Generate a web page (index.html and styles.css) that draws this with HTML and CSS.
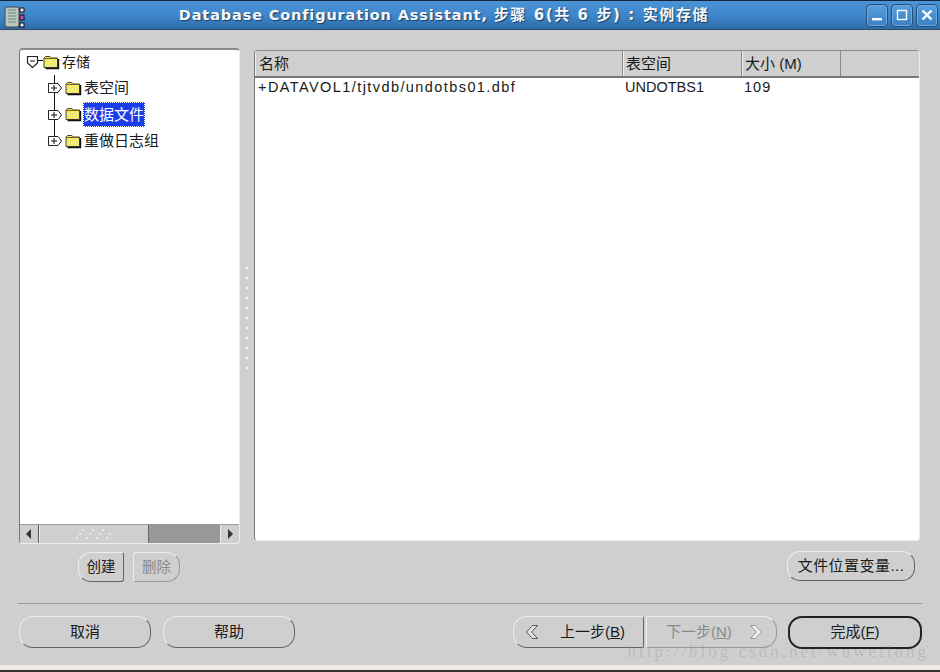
FILE: index.html
```html
<!DOCTYPE html>
<html lang="zh-CN">

<head>
  <meta charset="UTF-8">
  <title>Database Configuration Assistant</title>
  <link rel="stylesheet" href="styles.css">
</head>

<body>
  <svg class="defs" width="0" height="0">
    <defs>
      <pattern id="dither" width="2" height="2" patternUnits="userSpaceOnUse">
        <rect width="2" height="2" fill="#fdf65a"/>
        <rect width="1" height="1" fill="#e4e08c"/>
        <rect x="1" y="1" width="1" height="1" fill="#e4e08c"/>
      </pattern>
      <g id="folder">
        <path d="M1 3 L2.5 1.5 H7 L8.5 3 H14.5 V12.5 H1 Z" fill="url(#dither)" stroke="#4a4520" stroke-width="1"/>
        <path d="M1.5 3.5 H14" stroke="#6a5f20" stroke-width="1"/>
        <path d="M15.5 4 V13.5 H2.5" fill="none" stroke="#111" stroke-width="1.4"/>
      </g>
      <g id="expander">
        <path d="M1.5 1.5 H11 L14.5 6 L11 10.5 H1.5 Z" fill="#fff" stroke="#222" stroke-width="1"/>
        <path d="M4 6 H10 M7 3 V9" stroke="#111" stroke-width="1"/>
      </g>
    </defs>
  </svg>
  <div class="window">
    <header class="titlebar">
      <svg class="app-icon" width="36" height="25" viewBox="0 0 36 25">
        <rect x="3" y="4" width="14" height="20" rx="2" fill="#b9c6c0" stroke="#444"/>
        <path d="M6 7 H14 M6 10 H14 M6 13 H14 M6 16 H14 M6 19 H14" stroke="#6f8a80" stroke-width="1"/>
        <rect x="18" y="5" width="4" height="4" fill="#eee" stroke="#111"/>
        <rect x="18" y="12" width="4" height="5" fill="#c050c0" stroke="#111"/>
        <rect x="18" y="20" width="4" height="4" fill="#eee" stroke="#111"/>
      </svg>
      <div class="title">Database Configuration Assistant, <span class="title-cjk">步骤 6(共 6 步) : 实例存储</span></div>
      <div class="win-btns">
        <div class="win-btn">
          <svg width="20" height="20" viewBox="0 0 20 20"><rect x="5" y="13" width="10" height="2.4" fill="#fff"/></svg>
        </div>
        <div class="win-btn">
          <svg width="20" height="20" viewBox="0 0 20 20"><rect x="5.5" y="5.5" width="9" height="9" fill="none" stroke="#fff" stroke-width="1.4"/></svg>
        </div>
        <div class="win-btn">
          <svg width="20" height="20" viewBox="0 0 20 20"><path d="M5.5 5.5 L14.5 14.5 M14.5 5.5 L5.5 14.5" stroke="#fff" stroke-width="2.4"/></svg>
        </div>
      </div>
    </header>

    <main class="content">
      <div class="panes">
        <div class="left-pane">
          <div class="tree-box">
            <div class="tree">
              <div class="root-row">
                <svg class="root-exp" width="18" height="18" viewBox="0 0 18 18">
                  <path d="M2.5 3.5 H12.5 V10 L7.5 14.5 L2.5 10 Z" fill="#fff" stroke="#222" stroke-width="1.2"/>
                  <path d="M5 8 H10" stroke="#111"/>
                  <path d="M13 7.5 H18" stroke="#111"/>
                </svg>
                <svg class="folder" width="17" height="15"><use href="#folder"/></svg>
                <span class="node-label root-label">存储</span>
              </div>
              <div class="children">
                <div class="tree-row">
                  <svg class="exp" width="18" height="12"><use href="#expander"/></svg>
                  <svg class="folder" width="17" height="15"><use href="#folder"/></svg>
                  <span class="node-label">表空间</span>
                </div>
                <div class="tree-row">
                  <svg class="exp" width="18" height="12"><use href="#expander"/></svg>
                  <svg class="folder" width="17" height="15"><use href="#folder"/></svg>
                  <span class="node-label selected">数据文件</span>
                </div>
                <div class="tree-row">
                  <svg class="exp" width="18" height="12"><use href="#expander"/></svg>
                  <svg class="folder" width="17" height="15"><use href="#folder"/></svg>
                  <span class="node-label">重做日志组</span>
                </div>
              </div>
            </div>
            <div class="scrollbar">
              <div class="arrow-btn">
                <svg width="8" height="10" viewBox="0 0 8 10"><path d="M6 0 V10 L1 5 Z" fill="#333"/></svg>
              </div>
              <div class="thumb">
                <svg width="36" height="12" viewBox="0 0 36 12">
                  <path d="M6 1h2v2h-2z M16 1h2v2h-2z M26 1h2v2h-2z M3 5h2v2h-2z M13 5h2v2h-2z M23 5h2v2h-2z M33 5h2v2h-2z M0 9h2v2h-2z M10 9h2v2h-2z M20 9h2v2h-2z M30 9h2v2h-2z" fill="#e8e8e8"/>
                </svg>
              </div>
              <div class="track"></div>
              <div class="arrow-btn right">
                <svg width="8" height="10" viewBox="0 0 8 10"><path d="M2 0 V10 L7 5 Z" fill="#333"/></svg>
              </div>
            </div>
          </div>
          <div class="tree-actions">
            <button class="btn small pressed">创建</button>
            <button class="btn small disabled">删除</button>
          </div>
        </div>

        <div class="splitter"><span class="dots"></span></div>

        <div class="right-pane">
          <div class="table-box">
            <div class="table-head">
              <div class="col col-name">名称</div>
              <div class="col col-space">表空间</div>
              <div class="col col-size">大小 (M)</div>
              <div class="col col-rest"></div>
            </div>
            <div class="table-row">
              <div class="cell col-name file-name">+DATAVOL1/tjtvdb/undotbs01.dbf</div>
              <div class="cell col-space">UNDOTBS1</div>
              <div class="cell col-size">109</div>
            </div>
          </div>
          <div class="file-actions">
            <button class="btn vars">文件位置变量...</button>
          </div>
        </div>
      </div>

      <div class="separator"></div>

      <footer class="footer">
        <div class="footer-left">
          <button class="btn wide">取消</button>
          <button class="btn wide">帮助</button>
        </div>
        <div class="footer-right">
          <button class="btn nav back">
            <svg width="18" height="18" viewBox="0 0 18 18"><path d="M9.5 2.5 L3.5 9 L9.5 15.5 L14.5 15.5 L8.5 9 L14.5 2.5 Z" fill="#e8e8e8" stroke="#555"/></svg>
            <span>上一步(<u>B</u>)</span>
          </button>
          <button class="btn nav next disabled">
            <span>下一步(<u>N</u>)</span>
            <svg width="18" height="18" viewBox="0 0 18 18"><path d="M8.5 2.5 L14.5 9 L8.5 15.5 L3.5 15.5 L9.5 9 L3.5 2.5 Z" fill="#eee" stroke="#999"/></svg>
          </button>
          <button class="btn finish">完成(<u>F</u>)</button>
        </div>
      </footer>
      <div class="watermark">http://blog.csdn.net/wuweilong</div>
    </main>
    <div class="bottom-edge"></div>
  </div>
</body>

</html>
```

FILE: styles.css
```css
html,
body {
  margin: 0;
  padding: 0;
  height: 100%;
  background: #cfcfcf;
  color: #1a1a1a;
  font-family: "Liberation Sans", "Noto Sans CJK SC", sans-serif;
  font-size: 15px;
  overflow: hidden;
}

.defs {
  position: absolute;
}

.window {
  height: 672px;
  display: flex;
  flex-direction: column;
}

.titlebar {
  height: 30px;
  box-sizing: border-box;
  padding: 2px 2px 1px 2px;
  display: flex;
  align-items: center;
  border-top: 1px solid #16243a;
  border-bottom: 1px solid #2b4a6c;
  background: linear-gradient(#4a94d6, #3c85c9 55%, #2f6ca8);
}

.title {
  flex: 1;
  text-align: center;
  padding-right: 16px;
  padding-bottom: 4px;
  color: #f4f8fc;
  font-family: "DejaVu Sans", "Noto Sans CJK SC", sans-serif;
  font-size: 14.5px;
  font-weight: bold;
  letter-spacing: 0.85px;
  white-space: nowrap;
  text-shadow: 1px 1px 1px #1c3d60;
}

.title-cjk {
  font-size: 15px;
  letter-spacing: 1.6px;
}

.win-btns {
  display: flex;
  gap: 3px;
}

.win-btn {
  width: 22px;
  height: 23px;
  box-sizing: border-box;
  border: 1px solid #24507e;
  border-radius: 4px;
  background: linear-gradient(#5a9fde, #3a7fc2);
  box-shadow: inset 0 0 0 1px #6da8de;
}

.content {
  flex: 1;
  position: relative;
  padding: 18px 18px 0;
  display: flex;
  flex-direction: column;
}

.panes {
  display: flex;
  height: 534px;
}

.left-pane {
  width: 221px;
  margin-left: 1px;
  display: flex;
  flex-direction: column;
}

.tree-box {
  height: 496px;
  flex: none;
  box-sizing: border-box;
  border: 1px solid #777;
  border-top: 2px solid #8a8a8a;
  border-right-color: #eee;
  border-bottom-color: #eee;
  border-radius: 4px;
  background: #fff;
  display: flex;
  flex-direction: column;
  overflow: hidden;
}

.tree {
  flex: 1;
  padding: 0 0 0 5px;
}

.root-row {
  display: flex;
  align-items: center;
  height: 24px;
}

.root-label {
  font-size: 14px;
  margin-left: 2px;
}

.children {
  position: relative;
  margin-left: 22px;
  padding-top: 1px;
}

.children::before {
  content: "";
  position: absolute;
  left: 7px;
  top: 1px;
  height: 66px;
  border-left: 1px solid #111;
}

.tree-row {
  position: relative;
  display: flex;
  align-items: center;
  height: 26.5px;
}

.node-label {
  margin-left: 1px;
  padding: 0 1px;
  line-height: 22px;
}

.selected {
  background: #1a3fe8;
  color: #fff;
  outline: 1px dotted #fff;
  outline-offset: -1px;
  padding: 1.5px 1px;
}

.scrollbar {
  height: 19px;
  flex: none;
  box-sizing: border-box;
  display: flex;
  border-top: 1px solid #999;
  background: #cfcfcf;
}

.arrow-btn {
  width: 18px;
  display: flex;
  align-items: center;
  justify-content: center;
  border-right: 1px solid #555;
  border-radius: 6px 0 0 6px;
}

.arrow-btn.right {
  border-right: none;
  border-left: 1px solid #eee;
  border-radius: 0 6px 6px 0;
}

.thumb {
  width: 108px;
  display: flex;
  align-items: center;
  justify-content: center;
  background: #cfcfcf;
  border-left: 1px solid #eee;
  border-right: 1px solid #666;
}

.track {
  flex: 1;
  background: #9a989a;
}

.tree-actions {
  display: flex;
  gap: 9px;
  padding: 8px 0 0 59px;
}

.splitter {
  width: 14px;
  flex: none;
  display: flex;
  align-items: flex-start;
  justify-content: center;
}

.dots {
  display: block;
  margin-top: 215px;
  width: 4px;
  height: 110px;
  background-image: radial-gradient(circle at 2px 5px, #f4f4f4 1.2px, transparent 1.7px);
  background-size: 4px 10px;
}

.right-pane {
  width: 666px;
  flex: none;
  display: flex;
  flex-direction: column;
  padding-top: 2px;
}

.table-box {
  height: 491px;
  flex: none;
  box-sizing: border-box;
  border: 1px solid #777;
  border-top-color: #8a8a8a;
  border-right-color: #eee;
  border-bottom-color: #eee;
  border-radius: 4px;
  background: #fff;
  overflow: hidden;
}

.table-head {
  height: 27px;
  display: flex;
  background: #cfcfcf;
  border-bottom: 2px solid #777;
  box-sizing: border-box;
}

.col {
  box-sizing: border-box;
  line-height: 25px;
  padding-left: 2px;
  border-left: 1px solid #eee;
  border-right: 1px solid #888;
}

.table-head .col-name {
  padding-left: 3px;
}

.col-name {
  width: 368px;
}

.col-space {
  width: 119px;
}

.col-size {
  width: 99px;
}

.table-head .col-rest {
  flex: 1;
  border: none;
}

.table-row {
  display: flex;
  height: 20px;
  line-height: 18px;
}

.cell {
  box-sizing: border-box;
  padding-left: 3px;
  font-size: 14.5px;
}

.cell.col-space {
  padding-left: 2px;
}

.file-name {
  letter-spacing: 1.42px;
}

.cell.col-size {
  letter-spacing: 1px;
  padding-left: 2px;
}

.file-actions {
  display: flex;
  justify-content: flex-end;
  padding: 10px 5px 0 0;
}

.btn {
  box-sizing: border-box;
  padding: 0 0 4px;
  background: #cfcfcf;
  color: #1a1a1a;
  font: inherit;
  border: 1px solid #eee;
  border-right-color: #666;
  border-bottom-color: #666;
  border-radius: 13px;
}

.btn u {
  text-underline-offset: 1px;
}

.small {
  width: 47px;
  height: 30px;
  font-size: 14.5px;
}

.pressed {
  width: 46px;
  border-radius: 13px 3px 3px 13px;
}

.disabled {
  color: #8a8a8a;
  border-right-color: #999;
  border-bottom-color: #999;
}

.small.disabled {
  border-radius: 3px 13px 13px 3px;
}

.vars {
  width: 128px;
  height: 30px;
  letter-spacing: 0.45px;
}

.separator {
  margin-top: 21px;
  height: 1px;
  background: #999;
}

.footer {
  display: flex;
  justify-content: space-between;
  padding: 12px 0 0 1px;
}

.footer-left,
.footer-right {
  display: flex;
}

.footer-left {
  gap: 12px;
}

.wide {
  width: 132px;
  height: 32px;
  border-radius: 14px;
}

.nav {
  width: 131px;
  height: 32px;
  display: flex;
  align-items: center;
}

.nav svg {
  margin-bottom: -4px;
}

.back {
  padding-left: 9px;
  gap: 19px;
  border-radius: 14px 2px 2px 14px;
  margin-right: 2px;
}

.next {
  padding-left: 19px;
  gap: 15px;
  border-radius: 2px 14px 14px 2px;
  margin-right: 11px;
}

.finish {
  width: 134px;
  height: 33px;
  border: 2px solid #222;
  border-radius: 14px;
}

.watermark {
  position: absolute;
  right: 11px;
  top: 612px;
  color: rgba(120, 120, 120, 0.25);
  font-family: "Liberation Serif", serif;
  font-size: 17px;
  letter-spacing: 3px;
  white-space: nowrap;
  pointer-events: none;
}

.bottom-edge {
  height: 7px;
  box-sizing: border-box;
  background: #efebe4;
  border-bottom: 2px solid #333;
}
```
